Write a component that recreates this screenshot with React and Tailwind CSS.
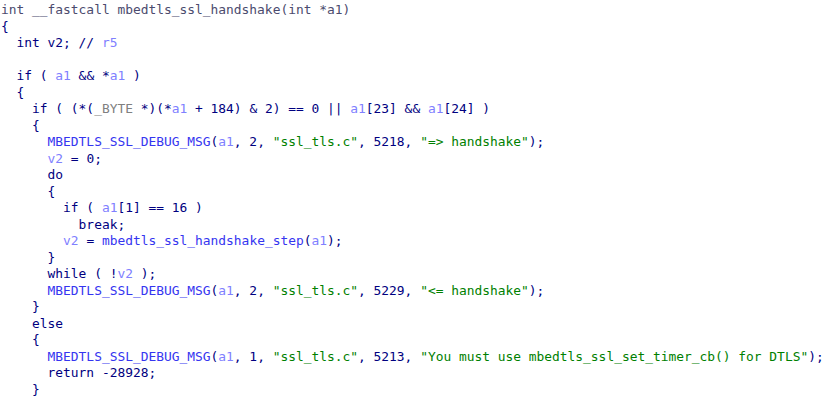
const N = "text-[#000080]";
const V = "text-[#8080ff]";
const G = "text-[#808080]";
const S = "text-[#008000]";
const F = "text-[#3535f0]";
const H = "text-[#4b4b6e]";

const lines = [
  [[H, "int __fastcall mbedtls_ssl_handshake(int *a1)"]],
  [[N, "{"]],
  [[N, "  int v2; // "], [V, "r5"]],
  [],
  [[N, "  if ( "], [V, "a1"], [N, " && *"], [V, "a1"], [N, " )"]],
  [[N, "  {"]],
  [
    [N, "    if ( (*("],
    [G, "_BYTE"],
    [N, " *)(*"],
    [V, "a1"],
    [N, " + 184) & 2) == 0 || "],
    [V, "a1"],
    [N, "[23] && "],
    [V, "a1"],
    [N, "[24] )"],
  ],
  [[N, "    {"]],
  [
    [F, "      MBEDTLS_SSL_DEBUG_MSG"],
    [N, "("],
    [V, "a1"],
    [N, ", 2, "],
    [S, '"ssl_tls.c"'],
    [N, ", 5218, "],
    [S, '"=> handshake"'],
    [N, ");"],
  ],
  [[N, "      "], [V, "v2"], [N, " = 0;"]],
  [[N, "      do"]],
  [[N, "      {"]],
  [[N, "        if ( "], [V, "a1"], [N, "[1] == 16 )"]],
  [[N, "          break;"]],
  [[N, "        "], [V, "v2"], [N, " = "], [F, "mbedtls_ssl_handshake_step"], [N, "("], [V, "a1"], [N, ");"]],
  [[N, "      }"]],
  [[N, "      while ( !"], [V, "v2"], [N, " );"]],
  [
    [F, "      MBEDTLS_SSL_DEBUG_MSG"],
    [N, "("],
    [V, "a1"],
    [N, ", 2, "],
    [S, '"ssl_tls.c"'],
    [N, ", 5229, "],
    [S, '"<= handshake"'],
    [N, ");"],
  ],
  [[N, "    }"]],
  [[N, "    else"]],
  [[N, "    {"]],
  [
    [F, "      MBEDTLS_SSL_DEBUG_MSG"],
    [N, "("],
    [V, "a1"],
    [N, ", 1, "],
    [S, '"ssl_tls.c"'],
    [N, ", 5213, "],
    [S, '"You must use mbedtls_ssl_set_timer_cb() for DTLS"'],
    [N, ");"],
  ],
  [[N, "      return -28928;"]],
  [[N, "    }"]],
];

export default function App() {
  return (
    <div className="h-[402px] w-[832px] overflow-hidden bg-white pt-[2px] pl-[1px] font-['DejaVu_Sans_Mono',monospace] text-[12.9px] leading-[16.5px]">
      {lines.map((toks, i) => (
        <div key={i} className="h-[16.5px] whitespace-pre">
          {toks.map(([cls, text], j) => (
            <span key={j} className={cls}>
              {text}
            </span>
          ))}
        </div>
      ))}
    </div>
  );
}
